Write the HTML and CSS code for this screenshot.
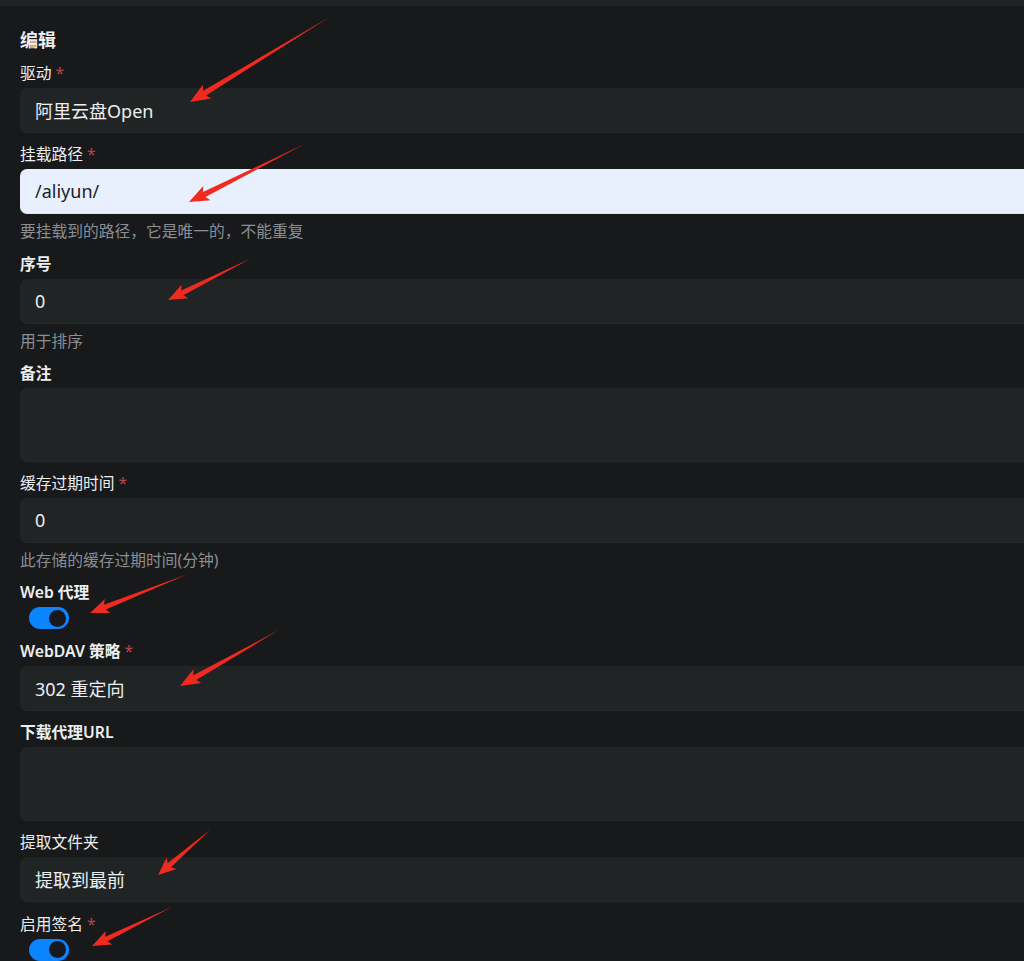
FILE: index.html
```html
<!DOCTYPE html>
<html lang="zh-CN">
<head>
    <meta charset="UTF-8">
    <meta name="viewport" content="width=device-width, initial-scale=1.0">
    <title>编辑存储</title>
    <link rel="stylesheet" href="styles.css">
</head>
<body>
    <div class="topbar"></div>
    <div class="panel">
        <h2 class="title">编辑</h2>
        <form class="storage-form">
            <div class="form-group">
                <label class="label">驱动 <span class="req">*</span></label>
                <div class="field">阿里云盘Open</div>
            </div>
            <div class="form-group">
                <label class="label">挂载路径 <span class="req">*</span></label>
                <div class="field autofill">/aliyun/</div>
                <div class="help">要挂载到的路径，它是唯一的，不能重复</div>
            </div>
            <div class="form-group">
                <label class="label strong">序号</label>
                <div class="field">0</div>
                <div class="help">用于排序</div>
            </div>
            <div class="form-group">
                <label class="label strong">备注</label>
                <div class="field area"></div>
            </div>
            <div class="form-group">
                <label class="label">缓存过期时间 <span class="req">*</span></label>
                <div class="field">0</div>
                <div class="help">此存储的缓存过期时间(分钟)</div>
            </div>
            <div class="form-group">
                <label class="label strong">Web 代理</label>
                <div class="switch"><span class="knob"></span></div>
            </div>
            <div class="form-group">
                <label class="label strong">WebDAV 策略 <span class="req">*</span></label>
                <div class="field">302 重定向</div>
            </div>
            <div class="form-group">
                <label class="label strong">下载代理URL</label>
                <div class="field area"></div>
            </div>
            <div class="form-group">
                <label class="label">提取文件夹</label>
                <div class="field">提取到最前</div>
            </div>
            <div class="form-group">
                <label class="label">启用签名 <span class="req">*</span></label>
                <div class="switch"><span class="knob"></span></div>
            </div>
        </form>
    </div>

    <!-- red annotation arrows drawn over the form -->
    <svg class="arrows" width="1024" height="961" viewBox="0 0 1024 961">
        <polygon transform="translate(190 102) rotate(148.7)" points="0,0 -20,-8 -17,-2.8 -164,0 -17,2.8 -20,8"/>
        <polygon transform="translate(189 202) rotate(153.4)" points="0,0 -20,-8 -17,-2.8 -130,0 -17,2.8 -20,8"/>
        <polygon transform="translate(168 300) rotate(153.4)" points="0,0 -19,-7.5 -16,-2.6 -92,0 -16,2.6 -19,7.5"/>
        <polygon transform="translate(90 613) rotate(158.3)" points="0,0 -19,-7.5 -16,-2.6 -105,0 -16,2.6 -19,7.5"/>
        <polygon transform="translate(180 686) rotate(150.5)" points="0,0 -20,-8 -17,-2.8 -114,0 -17,2.8 -20,8"/>
        <polygon transform="translate(158 875) rotate(139.1)" points="0,0 -18,-7.5 -15,-2.6 -69,0 -15,2.6 -18,7.5"/>
        <polygon transform="translate(92 946) rotate(154)" points="0,0 -19,-7.5 -16,-2.6 -89,0 -16,2.6 -19,7.5"/>
    </svg>
</body>
</html>
```

FILE: styles.css
```css
html, body {
    margin: 0;
    padding: 0;
    background-color: #18191b;
    overflow: hidden;
}

body {
    font-family: "Noto Sans", "Noto Sans CJK SC", sans-serif;
    color: #e6e8ea;
    height: 961px;
    position: relative;
}

.topbar {
    height: 6px;
    background-color: #202325;
}

.panel {
    padding: 23px 0 0 20px;
    display: flex;
    flex-direction: column;
    gap: 11px;
}

.title {
    margin: 0;
    font-size: 18px;
    line-height: 22px;
    font-weight: 700;
    color: #eceef0;
}

.storage-form {
    display: flex;
    flex-direction: column;
    gap: 10.3px;
}

.form-group {
    display: flex;
    flex-direction: column;
}

.label {
    font-size: 15.75px;
    line-height: 22px;
    font-weight: 400;
    margin-bottom: 4px;
    color: #eceef0;
}

.label.strong {
    font-weight: 600;
}

.req {
    color: #b8434a;
    font-weight: 400;
}

.field {
    width: calc(100% + 12px);
    height: 45px;
    box-sizing: border-box;
    padding: 0 15px;
    display: flex;
    align-items: center;
    background-color: #212425;
    border-radius: 7px;
    border-bottom: 1px solid #26292b;
    font-size: 18px;
    color: #eceef0;
}

.field.area {
    height: 74px;
}

.field.autofill {
    background-color: #e8f0fe;
    color: #1d2126;
    border-bottom: 1px solid #dde4f1;
}

.help {
    margin-top: 6px;
    font-size: 15.75px;
    line-height: 22px;
    color: #8b8f94;
}

.switch {
    margin-left: 9px;
    width: 40px;
    height: 22px;
    border-radius: 11px;
    background-color: #0a84ff;
    position: relative;
}

.knob {
    position: absolute;
    right: 3px;
    top: 2.5px;
    width: 17px;
    height: 17px;
    border-radius: 50%;
    background-color: #18191b;
}

.arrows {
    position: absolute;
    left: 0;
    top: 0;
    pointer-events: none;
}

.arrows polygon {
    fill: #f02a1f;
}
```
